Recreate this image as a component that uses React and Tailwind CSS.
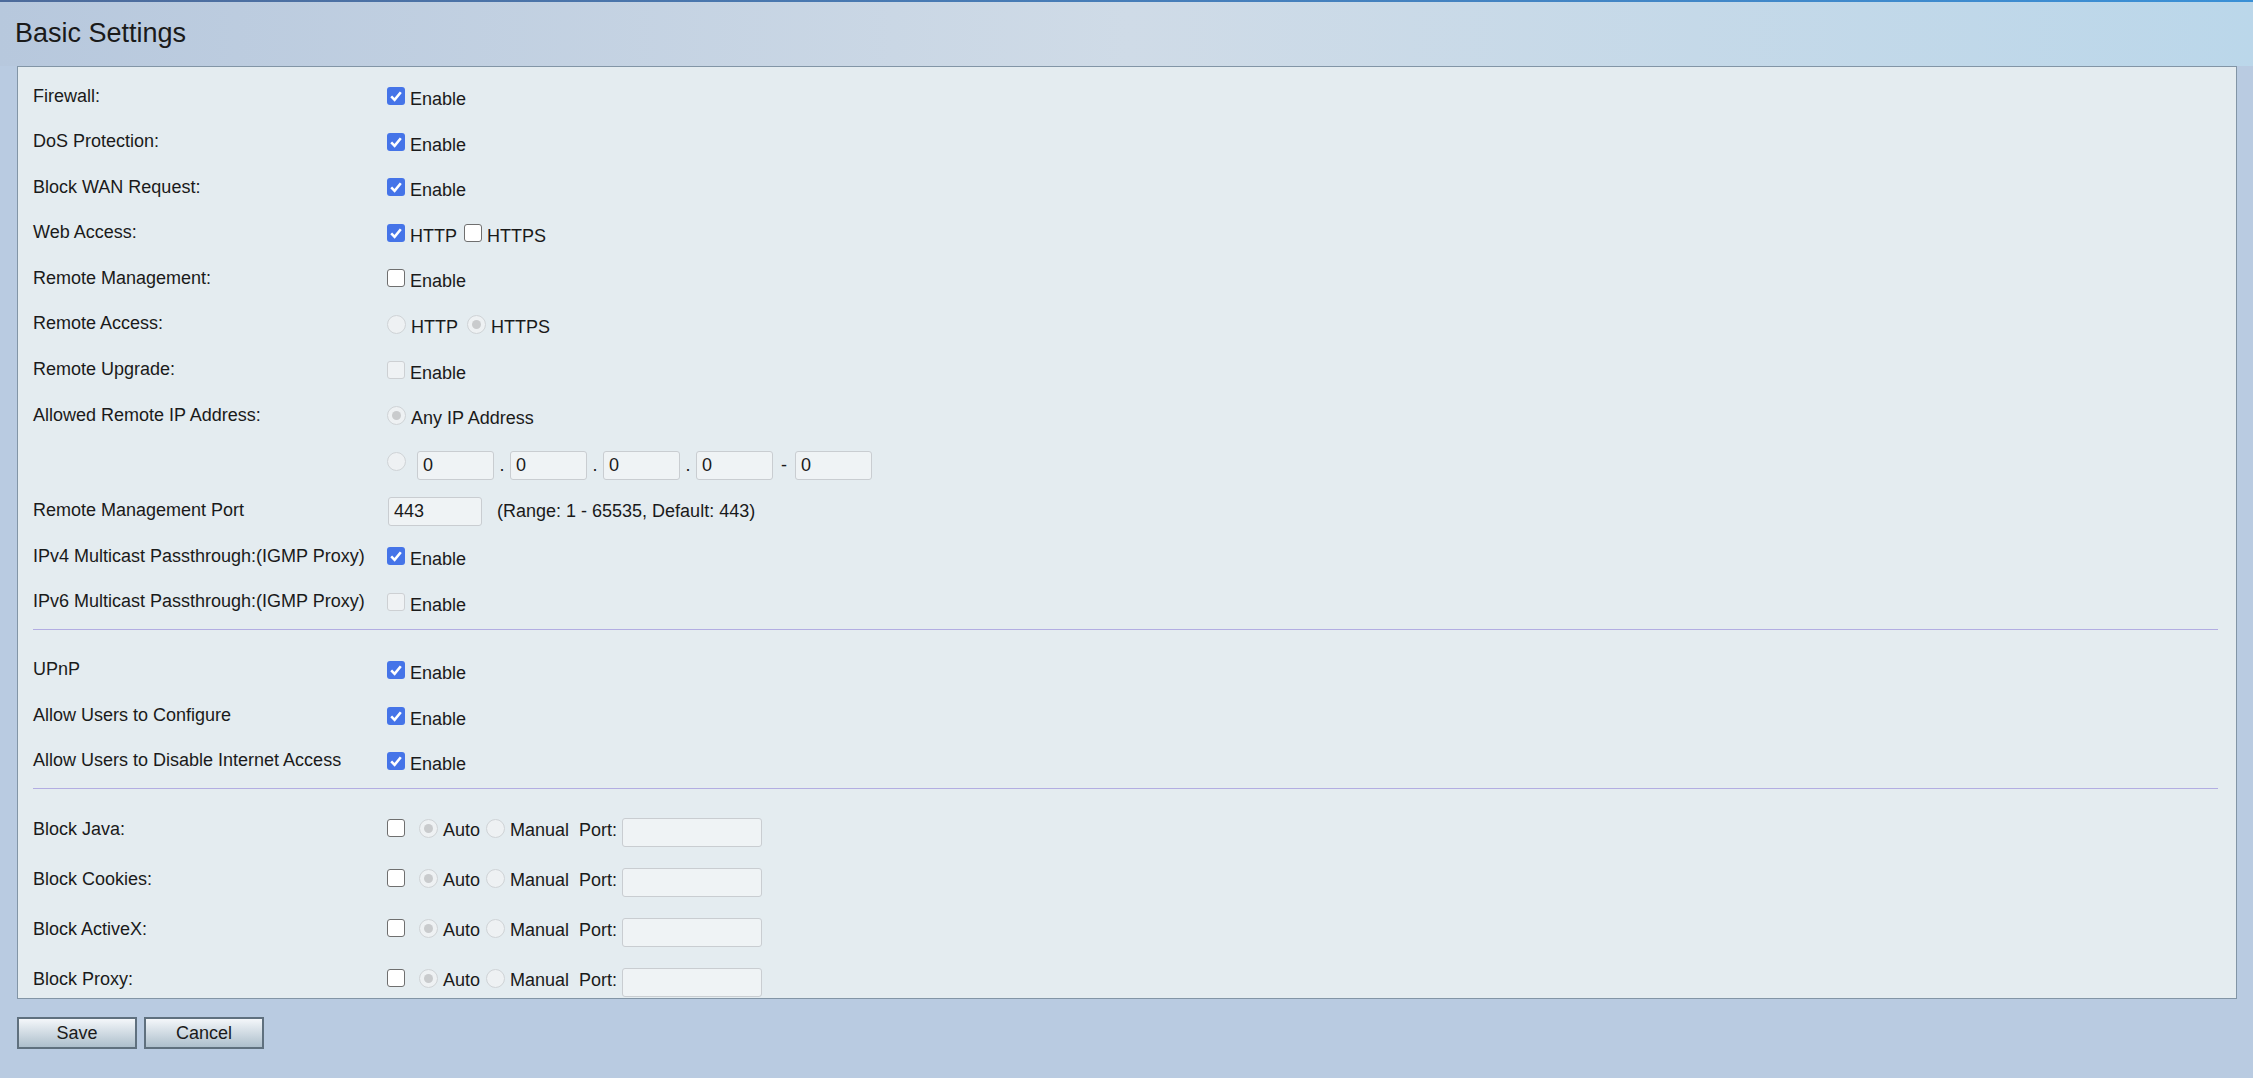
import React from "react";

const Box = ({ checked, disabled }) => {
  if (checked) {
    return (
      <span className="w-[18px] h-[18px] shrink-0 rounded-[3px] bg-[#4574e8] flex items-center justify-center">
        <svg width="18" height="18" viewBox="0 0 18 18">
          <path d="M4.2 9.4 L7.6 12.8 L13.8 5.2" stroke="#fff" strokeWidth="2.6" fill="none" />
        </svg>
      </span>
    );
  }
  if (disabled) {
    return <span className="block w-[18px] h-[18px] shrink-0 rounded-[3px] border-[1.5px] border-[#cdd0d3] bg-[#eff2f4]" />;
  }
  return <span className="block w-[18px] h-[18px] shrink-0 rounded-[3px] border-[1.5px] border-[#6f6f6f] bg-white" />;
};

const Radio = ({ checked }) => (
  <span className="w-[19px] h-[19px] shrink-0 rounded-full border-[1.5px] border-[#cfd3d6] bg-[#eef1f3] flex items-center justify-center">
    {checked && <span className="w-[9px] h-[9px] rounded-full bg-[#c9cbcd]" />}
  </span>
);

const Txt = ({ children, className = "ml-[5px] mt-[2px]" }) => (
  <span className={`leading-[21px] whitespace-pre ${className}`}>{children}</span>
);

const Row = ({ label, className = "h-[45.6px]", children }) => (
  <div className={`flex items-start ${className}`}>
    <div className="w-[354px] shrink-0 leading-[21px]">{label}</div>
    <div className="flex items-start pt-[1.5px]">{children}</div>
  </div>
);

const IpBox = () => (
  <div className="w-[77px] h-[29px] rounded-[3px] border border-[#c9cdd1] bg-[#eff3f5] pl-[5px] leading-[27px]">0</div>
);

const BlockRow = ({ label }) => (
  <div className="flex items-start h-[50px] last:h-[29.7px]">
    <div className="w-[354px] shrink-0 leading-[21px] mt-px">{label}</div>
    <div className="flex items-start">
      <span className="flex mt-px">
        <Box />
      </span>
      <span className="flex ml-[14px] mt-px">
        <Radio checked />
      </span>
      <Txt className="ml-[5px] mt-[1.7px]">Auto</Txt>
      <span className="flex ml-[6px] mt-px">
        <Radio />
      </span>
      <Txt className="ml-[5px] mt-[1.7px]">Manual</Txt>
      <Txt className="ml-[10px] mt-[1.7px]">Port:</Txt>
      <div className="ml-[5px] w-[140px] h-[29px] rounded-[3px] border border-[#c9cdd1] bg-[#eff3f5]" />
    </div>
  </div>
);

const App = () => {
  return (
    <div className="w-[2253px] h-[1078px] bg-[#b9cbe1] text-[18px] text-[#1a1a1a] font-['Liberation_Sans',Arial,sans-serif] overflow-hidden">
      <div className="h-[66px] bg-linear-to-r from-[#b7c8dd] via-[#cfdbe7] to-[#bbd7ea]">
        <div className="h-[2px] bg-linear-to-r from-[#4d6b9b] to-[#3a90d6]" />
        <div className="pl-[15px] pt-[16px] text-[27px] leading-[31px]">Basic Settings</div>
      </div>

      <div className="ml-[17px] w-[2220px] h-[933px] border border-[#8295a6] bg-[#e4ecf0] pl-[15px] pr-[18px] pt-[18.5px]">
        <Row label="Firewall:">
          <Box checked />
          <Txt>Enable</Txt>
        </Row>
        <Row label="DoS Protection:">
          <Box checked />
          <Txt>Enable</Txt>
        </Row>
        <Row label="Block WAN Request:">
          <Box checked />
          <Txt>Enable</Txt>
        </Row>
        <Row label="Web Access:">
          <Box checked />
          <Txt>HTTP</Txt>
          <span className="flex ml-[7px]">
            <Box />
          </span>
          <Txt>HTTPS</Txt>
        </Row>
        <Row label="Remote Management:">
          <Box />
          <Txt>Enable</Txt>
        </Row>
        <Row label="Remote Access:">
          <Radio />
          <Txt>HTTP</Txt>
          <span className="flex ml-[9px]">
            <Radio checked />
          </span>
          <Txt>HTTPS</Txt>
        </Row>
        <Row label="Remote Upgrade:">
          <Box disabled />
          <Txt>Enable</Txt>
        </Row>
        <Row label="Allowed Remote IP Address:">
          <Radio checked />
          <Txt>Any IP Address</Txt>
        </Row>
        <Row label="" className="h-[45.8px]">
          <Radio />
          <div className="flex items-center ml-[11px] -mt-px">
            <IpBox />
            <span className="w-[16px] text-center leading-[21px]">.</span>
            <IpBox />
            <span className="w-[16px] text-center leading-[21px]">.</span>
            <IpBox />
            <span className="w-[16px] text-center leading-[21px]">.</span>
            <IpBox />
            <span className="w-[22px] text-center leading-[21px]">-</span>
            <IpBox />
          </div>
        </Row>
        <div className="flex items-start h-[49.7px]">
          <div className="w-[354px] shrink-0 leading-[21px] mt-[4px]">Remote Management Port</div>
          <div className="flex items-start">
            <div className="ml-px mt-[0.6px] w-[94px] h-[29px] rounded-[3px] border border-[#c9cdd1] bg-[#eff3f5] pl-[5px] leading-[27px]">
              443
            </div>
            <Txt className="ml-[15px] mt-[4.5px]">(Range: 1 - 65535, Default: 443)</Txt>
          </div>
        </div>
        <Row label="IPv4 Multicast Passthrough:(IGMP Proxy)" className="h-[45.7px]">
          <Box checked />
          <Txt>Enable</Txt>
        </Row>
        <Row label="IPv6 Multicast Passthrough:(IGMP Proxy)" className="h-[37.8px]">
          <Box disabled />
          <Txt>Enable</Txt>
        </Row>

        <div className="h-px bg-[#b2ade2]" />

        <div className="pt-[28.9px]">
          <Row label="UPnP" className="h-[46px]">
            <Box checked />
            <Txt>Enable</Txt>
          </Row>
          <Row label="Allow Users to Configure" className="h-[45px]">
            <Box checked />
            <Txt>Enable</Txt>
          </Row>
          <Row label="Allow Users to Disable Internet Access" className="h-[38.1px]">
            <Box checked />
            <Txt>Enable</Txt>
          </Row>
        </div>

        <div className="h-px bg-[#b2ade2]" />

        <div className="pt-[29px]">
          <BlockRow label="Block Java:" />
          <BlockRow label="Block Cookies:" />
          <BlockRow label="Block ActiveX:" />
          <BlockRow label="Block Proxy:" />
        </div>
      </div>

      <div className="flex gap-[7px] ml-[17px] mt-[18.3px]">
        <button className="w-[120px] h-[32px] border-2 border-[#5f707e] bg-linear-to-b from-[#f4f7fa] to-[#adbfcc] leading-[28px] text-center">
          Save
        </button>
        <button className="w-[120px] h-[32px] border-2 border-[#5f707e] bg-linear-to-b from-[#f4f7fa] to-[#adbfcc] leading-[28px] text-center">
          Cancel
        </button>
      </div>
    </div>
  );
};

export default App;
